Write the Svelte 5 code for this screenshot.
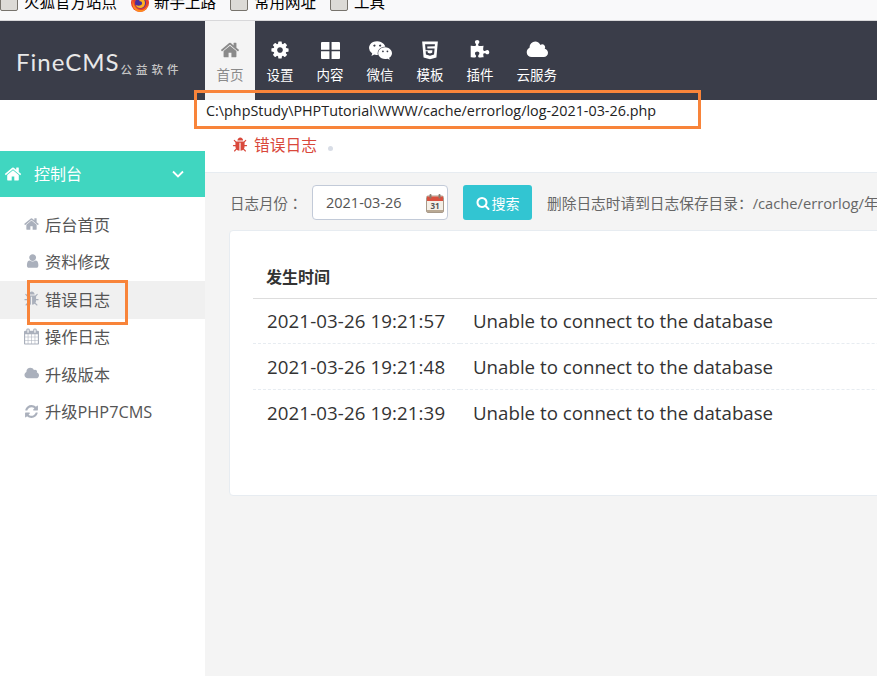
<script>
  const icons = {
    home: ['0 0 1664 1792', 'M1408 992v480q0 26-19 45t-45 19h-384v-384h-256v384h-384q-26 0-45-19t-19-45v-480q0-1 .5-3t.5-3l575-474 575 474q1 2 1 6zm223-69l-62 74q-8 9-21 11h-3q-13 0-21-7l-692-577-692 577q-12 8-24 7-13-2-21-11l-62-74q-8-10-7-23.5t11-21.5l719-599q32-26 76-26t76 26l244 204v-195q0-14 9-23t23-9h192q14 0 23 9t9 23v408l219 182q10 8 11 21.5t-7 23.5z'],
    cog: ['0 0 1536 1792', 'M1024 896q0-106-75-181t-181-75-181 75-75 181 75 181 181 75 181-75 75-181zm512-109v222q0 12-8 23t-20 13l-185 28q-19 54-39 91 35 50 107 138 10 12 10 25t-9 23q-27 37-99 108t-94 71q-12 0-26-9l-138-108q-44 23-91 38-16 136-29 186-7 28-36 28h-222q-14 0-24.5-8.5t-11.5-21.5l-28-184q-49-16-90-37l-141 107q-10 9-25 9-14 0-25-11-126-114-165-168-7-10-7-23 0-12 8-23 15-21 51-66.5t54-70.5q-27-50-41-99l-183-27q-13-2-21-12.5t-8-23.5v-222q0-12 8-23t19-13l186-28q14-46 39-92-40-57-107-138-10-12-10-24 0-10 9-23 26-36 98.5-107.5t94.5-71.5q13 0 26 10l138 107q44-23 91-38 16-136 29-186 7-28 36-28h222q14 0 24.5 8.5t11.5 21.5l28 184q49 16 90 37l142-107q9-9 24-9 13 0 25 10 129 119 165 170 7 8 7 22 0 12-8 23-15 21-51 66.5t-54 70.5q26 50 41 98l183 28q13 2 21 12.5t8 23.5z'],
    grid: ['0 0 18 16', 'M1 0h7v7.3H0V1a1 1 0 0 1 1-1zM10 0h7a1 1 0 0 1 1 1v6.3h-8zM0 8.7h8V16H1a1 1 0 0 1-1-1zM10 8.7h8V15a1 1 0 0 1-1 1h-7z'],
    wechat: ['0 0 2048 1792', 'M580 461q0-41-25-66t-66-25q-43 0-76 25.5t-33 65.5q0 39 33 64.5t76 25.5q41 0 66-24.5t25-65.5zm743 507q0-28-25.5-50t-65.5-22q-27 0-49.5 22.5t-22.5 49.5q0 28 22.5 50.5t49.5 22.5q40 0 65.5-22t25.5-51zm-236-507q0-41-24.5-66t-65.5-25q-43 0-76 25.5t-33 65.5q0 39 33 64.5t76 25.5q41 0 65.5-24.5t24.5-65.5zm635 507q0-28-26-50t-65-22q-27 0-49.5 22.5t-22.5 49.5q0 28 22.5 50.5t49.5 22.5q39 0 65-22t26-51zm-266-397q-31-4-70-4-169 0-311 77t-223.5 208.5-81.5 287.5q0 78 23 152-35 3-68 3-26 0-50-1.5t-55-6.5-44.5-7-54.5-10.5-50-10.5l-253 127 72-218q-290-203-290-490 0-169 97.5-311t264-223.5 363.5-81.5q176 0 332.5 66t262 182.5 136.5 260.5zm592 561q0 117-68.5 223.5t-185.5 193.5l55 181-199-109q-150 37-218 37-169 0-311-70.5t-223.5-191.5-81.5-264 81.5-264 223.5-191.5 311-70.5q161 0 303 70.5t227.5 192 85.5 263.5z'],
    html5: ['0 0 1408 1792', 'M1130 561l16-175h-884l47 534h612l-22 228-197 53-196-53-13-136h-175l22 293 362 100h4v-1l359-99 50-544h-644l-15-175zm-1130-433h1408l-128 1438-578 162-574-162z'],
    puzzle: ['0 0 1664 1792', 'M1664 1098q0 81-44.5 135t-123.5 54q-41 0-77.5-17.5t-59-38-56.5-38-71-17.5q-110 0-110 124 0 39 16 115t15 115v5q-22 0-33 1-34 3-97.5 11.5t-115.5 13.5-98 5q-61 0-103-26.5t-42-83.5q0-37 17.5-71t38-56.5 38-59 17.5-77.5q0-79-54-123.5t-135-44.5q-84 0-143 45.5t-59 127.5q0 43 15 83t33.5 64.5 33.5 53 15 50.5q0 45-46 89-37 35-117 35-95 0-245-24-9-2-27.5-4t-27.5-4l-13-2q-2 0-4-1-2 0-2-1v-1024q2 1 17.5 3.5t34 5 21.5 3.5q150 24 245 24 80 0 117-35 46-44 46-89 0-22-15-50.5t-33.5-53-33.5-64.5-15-83q0-82 59-127.5t144-45.5q80 0 134 44.5t54 123.5q0 41-17.5 77.5t-38 59-38 56.5-17.5 71q0 57 42 83.5t103 26.5q64 0 180-15t163-17v2q-1 2-3.5 17.5t-5 34-3.5 21.5q-24 150-24 245 0 80 35 117 44 46 89 46 22 0 50.5-15t53-33.5 64.5-33.5 83-15q82 0 127.5 59t45.5 143z'],
    cloud: ['0 0 1984 1792', 'M1984 1152q0 159-112.5 271.5t-271.5 112.5h-1088q-185 0-316.5-131.5t-131.5-316.5q0-132 71-241.5t187-163.5q-2-28-2-43 0-212 150-362t362-150q158 0 286.5 88t187.5 230q70-62 166-62 106 0 181 75t75 181q0 75-41 138 129 30 213 134.5t84 239.5z'],
    user: ['0 0 1536 1792', 'M1536 1399q0 109-62.5 187t-150.5 78h-854q-88 0-150.5-78t-62.5-187q0-85 8.5-160.5t31.5-152 58.5-131 94-89 134.5-34.5q131 128 313 128t313-128q76 0 134.5 34.5t94 89 58.5 131 31.5 152 8.5 160.5zm-256-887q0 159-112.5 271.5t-271.5 112.5-271.5-112.5-112.5-271.5 112.5-271.5 271.5-112.5 271.5 112.5 112.5 271.5z'],
    bug: ['0 0 1664 1792', 'M1632 960q0 26-19 45t-45 19h-224q0 171-67 290l208 209q19 19 19 45t-19 45q-18 19-45 19t-45-19l-198-197q-5 5-15 13t-42 28.5-65 36.5-82 29-97 13v-896h-128v896q-51 0-101.5-13.5t-87-33-66-39-43.5-32.5l-15-14-183 207q-20 21-48 21-24 0-43-16-19-18-20.5-44.5t15.5-46.5l202-227q-58-114-58-274h-224q-26 0-45-19t-19-45 19-45 45-19h224v-294l-173-173q-19-19-19-45t19-45 45-19 45 19l173 173h844l173-173q19-19 45-19t45 19 19 45-19 45l-173 173v294h224q26 0 45 19t19 45zm-448-576h-640q0-133 93.5-226.5t226.5-93.5 226.5 93.5 93.5 226.5z'],
    calendar: ['0 0 1664 1792', 'M128 1664h288v-288h-288v288zm352 0h320v-288h-320v288zm-352-352h288v-320h-288v320zm352 0h320v-320h-320v320zm-352-384h288v-288h-288v288zm736 736h320v-288h-320v288zm-384-736h320v-288h-320v288zm768 736h288v-288h-288v288zm-384-352h320v-320h-320v320zm-352-864v-288q0-13-9.5-22.5t-22.5-9.5h-64q-13 0-22.5 9.5t-9.5 22.5v288q0 13 9.5 22.5t22.5 9.5h64q13 0 22.5-9.5t9.5-22.5zm736 864h288v-320h-288v320zm-384-384h320v-288h-320v288zm384 0h288v-288h-288v288zm32-480v-288q0-13-9.5-22.5t-22.5-9.5h-64q-13 0-22.5 9.5t-9.5 22.5v288q0 13 9.5 22.5t22.5 9.5h64q13 0 22.5-9.5t9.5-22.5zm384-64v1280q0 52-38 90t-90 38h-1408q-52 0-90-38t-38-90v-1280q0-52 38-90t90-38h128v-96q0-66 47-113t113-47h64q66 0 113 47t47 113v96h384v-96q0-66 47-113t113-47h64q66 0 113 47t47 113v96h128q52 0 90 38t38 90z'],
    refresh: ['0 0 1792 1792', 'M1639 1056q0 5-1 7-64 268-268 434.5t-478 166.5q-146 0-282.5-55t-243.5-157l-129 129q-19 19-45 19t-45-19-19-45v-448q0-26 19-45t45-19h448q26 0 45 19t19 45-19 45l-137 137q71 66 161 102t187 36q134 0 250-65t186-179q11-17 53-117 8-23 30-23h192q13 0 22.5 9.5t9.5 22.5zm25-800v448q0 26-19 45t-45 19h-448q-26 0-45-19t-19-45 19-45l138-138q-148-137-349-137-134 0-250 65t-186 179q-11 17-53 117-8 23-30 23h-199q-13 0-22.5-9.5t-9.5-22.5v-7q65-268 270-434.5t480-166.5q146 0 284 55.5t245 156.5l130-129q19-19 45-19t45 19 19 45z'],
    search: ['0 0 1792 1792', 'M1216 832q0-185-131.5-316.5t-316.5-131.5-316.5 131.5-131.5 316.5 131.5 316.5 316.5 131.5 316.5-131.5 131.5-316.5zm512 832q0 52-38 90t-90 38q-54 0-90-38l-343-342q-179 124-399 124-143 0-273.5-55.5t-225-150-150-225-55.5-273.5 55.5-273.5 150-225 225-150 273.5-55.5 273.5 55.5 225 150 150 225 55.5 273.5q0 220-124 399l343 343q37 37 37 90z']
  }

  const bookmarks = [
    { label: '火狐官方站点', type: 'folder' },
    { label: '新手上路', type: 'firefox' },
    { label: '常用网址', type: 'folder' },
    { label: '工具', type: 'folder' }
  ]

  const nav = [
    { label: '首页', icon: 'home', size: 20, active: true },
    { label: '设置', icon: 'cog', size: 20 },
    { label: '内容', icon: 'grid', size: 19 },
    { label: '微信', icon: 'wechat', size: 23 },
    { label: '模板', icon: 'html5', size: 20 },
    { label: '插件', icon: 'puzzle', size: 20 },
    { label: '云服务', icon: 'cloud', size: 22 }
  ]

  const menu = [
    { label: '后台首页', icon: 'home', size: 16 },
    { label: '资料修改', icon: 'user', size: 16 },
    { label: '错误日志', icon: 'bug', size: 16, active: true },
    { label: '操作日志', icon: 'calendar', size: 17 },
    { label: '升级版本', icon: 'cloud', size: 19 },
    { label: '升级PHP7CMS', icon: 'refresh', size: 17 }
  ]

  const logs = [
    { time: '2021-03-26 19:21:57', msg: 'Unable to connect to the database' },
    { time: '2021-03-26 19:21:48', msg: 'Unable to connect to the database' },
    { time: '2021-03-26 19:21:39', msg: 'Unable to connect to the database' }
  ]
</script>

{#snippet fa(name, size)}
  <svg width={size} height={size} viewBox={icons[name][0]} fill="currentColor"><path d={icons[name][1]} /></svg>
{/snippet}

<div class="page">
  <div class="bookmarks">
    {#each bookmarks as b}
      <div class="bookmark">
        {#if b.type === 'folder'}
          <span class="folder"></span>
        {:else}
          <svg class="firefox" width="18" height="18" viewBox="0 0 18 18">
            <circle cx="9" cy="9" r="9" fill="#e8402c" />
            <circle cx="9.5" cy="9" r="5.5" fill="#4a2f9c" />
            <path d="M9 4c3 0 5 2 5 5s-2 5-5 5c-2 0-4-1-4-3 2 1 5 1 6-1 .5-2-1-3-3-3 1-1 1-2 1-3z" fill="#ffb01f" />
            <path d="M2 5c0 6 3 11 8 11 3 0 6-2 7-6 0 4-3 8-8 8S0 13 2 5z" fill="#ff8a1f" />
          </svg>
        {/if}
        <span>{b.label}</span>
      </div>
    {/each}
  </div>

  <header class="topbar">
    <div class="logo"><span class="logo-name">FineCMS</span><span class="logo-sub">公益软件</span></div>
    <nav class="nav">
      {#each nav as item}
        <div class="nav-item" class:active={item.active}>
          <div class="nav-icon">{@render fa(item.icon, item.size)}</div>
          <div>{item.label}</div>
        </div>
      {/each}
    </nav>
  </header>

  <div class="body">
    <aside class="sidebar">
      <div class="group">
        {@render fa('home', 18)}
        <span class="group-label">控制台</span>
        <svg class="chevron" width="12" height="8" viewBox="0 0 12 8" fill="none" stroke="currentColor" stroke-width="1.8"><path d="M1 1.5l5 5 5-5" /></svg>
      </div>
      <ul class="menu">
        {#each menu as item}
          <li class:active={item.active}>
            <span class="menu-icon">{@render fa(item.icon, item.size)}</span>
            <span>{item.label}</span>
          </li>
        {/each}
      </ul>
    </aside>

    <main class="main">
      <div class="title">
        <span class="title-icon">{@render fa('bug', 16)}</span>
        <span>错误日志</span>
        <span class="dot"></span>
      </div>

      <div class="toolbar">
        <span class="field-label">日志月份：</span>
        <div class="date-input">
          <span>2021-03-26</span>
          <svg class="cal" width="18" height="19" viewBox="0 0 18 19">
            <rect x="0.5" y="2" width="17" height="16.5" rx="1.5" fill="#f4efe6" stroke="#a89a8a" />
            <rect x="1" y="2.5" width="16" height="4.5" fill="#d9503f" />
            <rect x="3.5" y="0" width="2" height="4.5" rx="1" fill="#8a7a6c" />
            <rect x="12.5" y="0" width="2" height="4.5" rx="1" fill="#8a7a6c" />
            <rect x="1" y="16" width="16" height="2" fill="#b9a994" />
            <text x="9" y="14.5" class="cal-num">31</text>
          </svg>
        </div>
        <button class="search">{@render fa('search', 14)}<span>搜索</span></button>
        <span class="hint">删除日志时请到日志保存目录：/cache/errorlog/年-月-日.php</span>
      </div>

      <section class="card">
        <table class="logs">
          <thead>
            <tr><th class="col-time">发生时间</th><th></th></tr>
          </thead>
          <tbody>
            {#each logs as row}
              <tr><td class="time">{row.time}</td><td>{row.msg}</td></tr>
            {/each}
          </tbody>
        </table>
      </section>
    </main>
  </div>

  <div class="mark mark-path">C:\phpStudy\PHPTutorial\WWW/cache/errorlog/log-2021-03-26.php</div>
  <div class="mark mark-menu"></div>
</div>

<style>
  :global(body) {
    margin: 0;
    background: #fff;
  }

  .page {
    position: relative;
    width: 877px;
    height: 676px;
    overflow: hidden;
    display: flex;
    flex-direction: column;
    font-family: "Open Sans", "Noto Sans CJK SC", sans-serif;
    color: #333;
  }

  .bookmarks {
    flex: none;
    height: 21px;
    box-sizing: border-box;
    padding-bottom: 8px;
    display: flex;
    align-items: flex-end;
    background: #f9f9fa;
    border-bottom: 1px solid #d8d8da;
    overflow: hidden;
    font-size: 15.5px;
    line-height: 20px;
    color: #000;
  }

  .bookmark {
    display: flex;
    align-items: center;
    gap: 6px;
    margin-right: 14px;
    white-space: nowrap;
  }

  .bookmark .firefox {
    flex: none;
    margin: 2px -1px 0 0;
  }

  .folder {
    flex: none;
    width: 18px;
    height: 18px;
    box-sizing: border-box;
    background: #dcdad6;
    border: 1px solid #77736c;
    border-radius: 2px;
  }

  .topbar {
    flex: none;
    height: 79px;
    display: flex;
    background: #3a3d49;
    color: #fff;
  }

  .logo {
    width: 205px;
    box-sizing: border-box;
    padding: 26px 0 0 16px;
    color: #e8e8e8;
    white-space: nowrap;
  }

  .logo-name {
    font-family: "Lato", sans-serif;
    font-weight: 400;
    font-size: 24px;
    letter-spacing: 1px;
  }

  .logo-sub {
    margin-left: 1px;
    font-size: 11.5px;
    font-weight: 500;
    letter-spacing: 4px;
    color: #c4c4c4;
    vertical-align: -3px;
  }

  .nav {
    display: flex;
  }

  .nav-item {
    padding: 0 11.5px;
    display: flex;
    flex-direction: column;
    align-items: center;
    font-size: 13.5px;
    line-height: 18px;
  }

  .nav-item.active {
    background: #f4f4f4;
    color: #8a8a8a;
  }

  .nav-icon {
    height: 24px;
    margin: 17px 0 4px;
    display: flex;
    align-items: center;
    justify-content: center;
  }

  .body {
    flex: 1;
    display: flex;
    min-height: 0;
  }

  .sidebar {
    flex: none;
    width: 205px;
    padding-top: 51px;
    background: #fff;
  }

  .group {
    height: 46px;
    padding: 0 21px 0 4px;
    display: flex;
    align-items: center;
    background: #40d6c0;
    color: #fff;
    font-size: 16px;
    line-height: 20px;
  }

  .group-label {
    margin-left: 12px;
    flex: 1;
  }

  .menu {
    list-style: none;
    margin: 9px 0 0;
    padding: 0;
  }

  .menu li {
    height: 37.5px;
    box-sizing: border-box;
    padding: 0 0 2px 24px;
    display: flex;
    align-items: center;
    gap: 6px;
    font-size: 16.3px;
    color: #555;
    white-space: nowrap;
  }

  .menu li.active {
    background: #f0f0f0;
  }

  .menu-icon {
    width: 15px;
    display: flex;
    justify-content: center;
    color: #aab0bc;
  }

  .main {
    flex: 1;
    min-width: 0;
    background: #f4f4f4;
    overflow: hidden;
  }

  .title {
    height: 73px;
    box-sizing: border-box;
    padding: 33px 0 0 26px;
    display: flex;
    align-items: flex-start;
    background: #fff;
    border-bottom: 1px solid #e7ecf1;
    font-size: 15.75px;
    line-height: 24px;
    color: #d9483b;
    white-space: nowrap;
  }

  .title-icon {
    width: 22px;
    height: 24px;
    display: flex;
    align-items: center;
    margin-left: 1px;
  }

  .dot {
    width: 5px;
    height: 5px;
    margin: 13px 0 0 11px;
    border-radius: 50%;
    background: #d8dde6;
  }

  .toolbar {
    margin-top: 12px;
    padding-left: 25px;
    display: flex;
    align-items: center;
    height: 35px;
    white-space: nowrap;
    font-size: 14.5px;
    color: #666;
  }

  .toolbar > * {
    flex: none;
  }

  .field-label {
    width: 82px;
    font-family: "Open Sans", "Noto Sans CJK TC", sans-serif;
  }

  .date-input {
    width: 136px;
    height: 35px;
    box-sizing: border-box;
    padding-left: 13px;
    display: flex;
    align-items: center;
    justify-content: space-between;
    background: #fff;
    border: 1px solid #c2cad8;
    border-radius: 4px;
    color: #555;
  }

  .cal {
    margin: 2px 3px 0 0;
  }

  .cal-num {
    font-size: 8px;
    font-weight: 700;
    fill: #555;
    text-anchor: middle;
  }

  .search {
    width: 69px;
    height: 35px;
    margin-left: 15px;
    padding: 0;
    display: flex;
    align-items: center;
    justify-content: center;
    gap: 2px;
    background: #32c5d2;
    border: 0;
    border-radius: 3px;
    color: #fff;
    font: inherit;
    font-size: 14px;
  }

  .hint {
    margin-left: 15px;
    font-size: 14.7px;
  }

  .card {
    width: 760px;
    height: 266px;
    box-sizing: border-box;
    margin: 10px 0 0 24px;
    padding: 26px 23px 0;
    background: #fff;
    border: 1px solid #e7ecf1;
    border-radius: 4px;
  }

  .logs {
    width: 100%;
    table-layout: fixed;
    border-collapse: collapse;
    color: #333;
  }

  .logs th {
    height: 41px;
    box-sizing: border-box;
    padding: 0 0 3px 13px;
    text-align: left;
    font-size: 16px;
    font-weight: 700;
    border-bottom: 1px solid #ddd;
  }

  .logs .col-time {
    width: 207px;
  }

  .logs td {
    height: 45.5px;
    box-sizing: border-box;
    padding: 0 0 0 13px;
    font-size: 18.7px;
    white-space: nowrap;
    border-bottom: 1px dashed #e7ecf1;
  }

  .logs td.time {
    padding-left: 14px;
    letter-spacing: 0.1px;
  }

  .logs tr:last-child td {
    border-bottom: 0;
  }

  .mark {
    position: absolute;
    box-sizing: border-box;
    border: 3px solid #f8843a;
  }

  .mark-path {
    left: 194px;
    top: 90px;
    width: 507px;
    height: 39px;
    padding: 9px 0 0 9px;
    font-size: 14.35px;
    line-height: 18px;
    color: #222;
    white-space: nowrap;
  }

  .mark-menu {
    left: 27px;
    top: 280px;
    width: 101px;
    height: 45px;
  }
</style>
